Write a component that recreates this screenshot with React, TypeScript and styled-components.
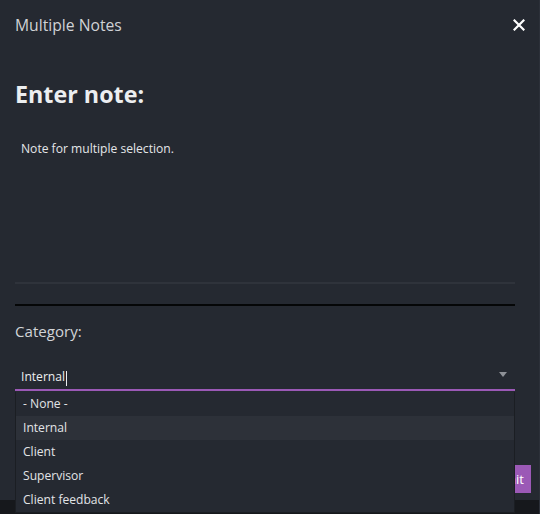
import React from 'react';
import styled, { createGlobalStyle } from 'styled-components';

const GlobalStyle = createGlobalStyle`
  html, body {
    margin: 0;
    padding: 0;
    background: #252931;
  }
  body {
    font-family: 'Open Sans', 'Noto Sans', sans-serif;
  }
`;

const Modal = styled.div`
  position: relative;
  width: 540px;
  height: 514px;
  background: #252931;
  border-right: 1px solid #2c3039;
  box-sizing: border-box;
  display: flex;
  flex-direction: column;
  overflow: hidden;
`;

const Header = styled.header`
  height: 49px;
  display: flex;
  align-items: center;
  justify-content: space-between;
  padding: 0 12px 0 15px;
`;

const Title = styled.h1`
  margin: 0;
  font-size: 15.7px;
  font-weight: 400;
  color: #d0d2d6;
`;

const CloseButton = styled.button`
  border: none;
  background: none;
  padding: 0;
  width: 16px;
  height: 16px;
  display: flex;
  align-items: center;
  justify-content: center;
  cursor: pointer;
`;

const Body = styled.div`
  padding: 0 24px 0 15px;
  display: flex;
  flex-direction: column;
`;

const Heading = styled.h2`
  margin: 26px 0 0;
  font-size: 23.3px;
  line-height: 38px;
  font-weight: 700;
  color: #eceef0;
`;

const NoteArea = styled.div`
  height: 156px;
  margin-top: 15px;
  padding: 12px 6px;
  box-sizing: border-box;
  border-bottom: 2px solid #2f333b;
  font-size: 12.1px;
  color: #e4e6e9;
`;

const Divider = styled.hr`
  margin: 20px 0 0;
  border: none;
  border-top: 2px solid #050607;
  height: 0;
`;

const Label = styled.label`
  margin-top: 14px;
  font-size: 15.1px;
  line-height: 22px;
  color: #d2d4d8;
`;

const SelectWrap = styled.div`
  position: relative;
  margin-top: 23px;
`;

const SelectField = styled.div`
  height: 24px;
  display: flex;
  align-items: center;
  justify-content: space-between;
  padding: 0 8px 0 6px;
  border-bottom: 2px solid #9b59b6;
  font-size: 12.1px;
  color: #eceef0;
`;

const Caret = styled.span`
  display: inline-block;
  width: 1px;
  height: 15px;
  background: #eceef0;
  margin-left: 1px;
  vertical-align: middle;
`;

const Arrow = styled.span`
  width: 0;
  height: 0;
  border-left: 4px solid transparent;
  border-right: 4px solid transparent;
  border-top: 5px solid #8e9197;
  margin-top: -5px;
`;

const Menu = styled.ul`
  position: absolute;
  top: 27px;
  left: 0;
  right: 0;
  margin: 0;
  padding: 0;
  list-style: none;
  background: #252931;
  border: 1px solid #1b1e23;
  border-top: none;
  z-index: 10;
`;

const Option = styled.li<{ $active?: boolean }>`
  height: 24px;
  line-height: 24px;
  padding: 0 7px;
  font-size: 12.1px;
  color: #e2e4e7;
  background: ${p => (p.$active ? '#2d3139' : 'transparent')};
`;

const Actions = styled.div`
  margin-top: auto;
  display: flex;
  justify-content: flex-end;
  padding: 0 8px 7px 0;
`;

const SubmitButton = styled.button`
  height: 28px;
  padding: 0 7px;
  border: none;
  background: #9b59b6;
  color: #fff;
  font-family: inherit;
  font-size: 13px;
`;

const Footer = styled.div`
  height: 14px;
  background: #16181c;
`;

const options = ['- None -', 'Internal', 'Client', 'Supervisor', 'Client feedback'];

const App = () => (
  <Modal>
    <GlobalStyle />
    <Header>
      <Title>Multiple Notes</Title>
      <CloseButton aria-label="close">
        <svg width="12" height="12" viewBox="0 0 12 12">
          <path d="M1.5 1.5 L10.5 10.5 M10.5 1.5 L1.5 10.5" stroke="#ffffff" strokeWidth="2.2" strokeLinecap="square" />
        </svg>
      </CloseButton>
    </Header>
    <Body>
      <Heading>Enter note:</Heading>
      <NoteArea>Note for multiple selection.</NoteArea>
      <Divider />
      <Label>Category:</Label>
      <SelectWrap>
        <SelectField>
          <span>
            Internal
            <Caret />
          </span>
          <Arrow />
        </SelectField>
        <Menu>
          {options.map(o => (
            <Option key={o} $active={o === 'Internal'}>
              {o}
            </Option>
          ))}
        </Menu>
      </SelectWrap>
    </Body>
    <Actions>
      <SubmitButton>Submit</SubmitButton>
    </Actions>
    <Footer />
  </Modal>
);

export default App;
